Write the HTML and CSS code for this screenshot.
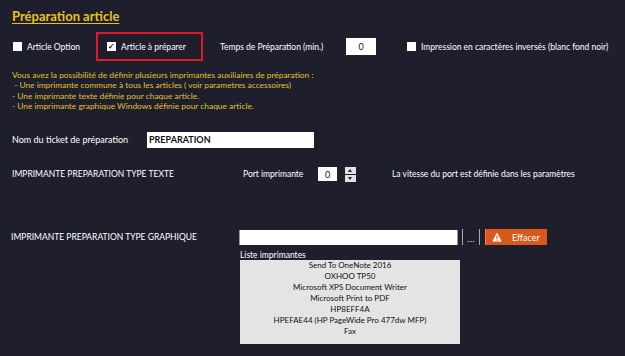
FILE: index.html
```
<!DOCTYPE html>
<html lang="fr">
<head>
  <meta charset="UTF-8" />
  <title>Préparation article</title>
  <link rel="stylesheet" href="styles.css">
</head>
<body>
<div class="page">
  <h2 class="title">Préparation article</h2>

  <div class="options">
    <label class="check opt1"><span class="box"></span>Article Option</label>
    <div class="highlight">
      <label class="check"><span class="box checked">&#10003;</span>Article à préparer</label>
    </div>
    <span class="temps">Temps de Préparation (min.)</span>
    <input class="field small" type="text" value="0">
    <label class="check inv"><span class="box"></span>Impression en caractères inversés (blanc fond noir)</label>
  </div>

  <div class="info">
    Vous avez la possibilité de définir plusieurs imprimantes auxiliaires de préparation :<br>
    &nbsp;- Une imprimante commune à tous les articles ( voir parametres accessoires)<br>
    - Une imprimante texte définie pour chaque article.<br>
    - Une imprimante graphique Windows définie pour chaque article.
  </div>

  <div class="row nom">
    <span class="lbl">Nom du ticket de préparation</span>
    <input class="field ticket" type="text" value="PREPARATION">
  </div>

  <div class="row texte">
    <span class="lbl">IMPRIMANTE PREPARATION TYPE TEXTE</span>
    <span class="port">Port imprimante</span>
    <input class="field port-in" type="text" value="0">
    <span class="spin"><span class="up"></span><span class="down"></span></span>
    <span class="hint">La vitesse du port est définie dans les paramètres</span>
  </div>

  <div class="row graph">
    <span class="lbl">IMPRIMANTE PREPARATION TYPE GRAPHIQUE</span>
    <input class="field printer" type="text" value="">
    <button class="dots">...</button>
    <button class="effacer">
      <svg width="10" height="10" viewBox="0 0 10 10"><path d="M5 0.5 L9.7 9.5 L0.3 9.5 Z" fill="#fff"/><rect x="4.4" y="3.4" width="1.2" height="3.4" fill="#d9581c"/><rect x="4.4" y="7.5" width="1.2" height="1.2" fill="#d9581c"/></svg>
      Effacer
    </button>
  </div>

  <div class="liste">
    <div class="liste-lbl">Liste imprimantes</div>
    <div class="listbox">
      <div>Send To OneNote 2016</div>
      <div>OXHOO TP50</div>
      <div>Microsoft XPS Document Writer</div>
      <div>Microsoft Print to PDF</div>
      <div>HP8EFF4A</div>
      <div>HPEFAE44 (HP PageWide Pro 477dw MFP)</div>
      <div>Fax</div>
    </div>
  </div>
</div>
</body>
</html>
```

FILE: styles.css
```
body {
  margin: 0;
  background: #1e1e2d;
  color: #fff;
  font-family: Lato, "Liberation Sans", sans-serif;
  font-size: 8.5px;
}
.page {
  padding: 8px 0 0 12px;
}
.title {
  margin: 0;
  color: #e8c21c;
  font-size: 13px;
  font-weight: bold;
  text-decoration: underline;
  text-underline-offset: 2px;
  line-height: 16px;
  width: max-content;
}
.options {
  display: flex;
  align-items: center;
  margin-top: 8px;
  height: 29px;
}
.check {
  display: flex;
  align-items: center;
  gap: 5px;
}
.box {
  width: 9px;
  height: 9px;
  background: #fff;
  color: #111;
  font-size: 8px;
  line-height: 9px;
  text-align: center;
  font-weight: bold;
}
.opt1 {
  margin-left: 1px;
  width: 83px;
}
.highlight {
  box-sizing: border-box;
  width: 107px;
  height: 29px;
  border: 2px solid #e01a24;
  display: flex;
  align-items: center;
  padding-left: 9px;
}
.temps {
  margin-left: 17px;
  width: 126px;
}
.field {
  box-sizing: border-box;
  border: none;
  background: #fff;
  color: #111;
  font-family: Lato, "Liberation Sans", sans-serif;
  font-size: 9px;
  padding: 0 2px;
  outline: none;
}
.small {
  width: 30px;
  height: 17px;
  text-align: center;
}
.inv {
  margin-left: 31px;
}
.info {
  margin-top: 9px;
  color: #e0c22a;
  font-size: 8.4px;
  line-height: 10.3px;
}
.row {
  display: flex;
  align-items: center;
}
.nom {
  margin-top: 20px;
  height: 17px;
}
.nom .lbl {
  width: 135px;
  font-size: 9px;
}
.ticket {
  width: 167px;
  height: 16px;
  font-weight: bold;
}
.texte {
  margin-top: 18px;
  height: 16px;
}
.texte .lbl {
  width: 231px;
}
.port {
  width: 75px;
}
.port-in {
  width: 19px;
  height: 14px;
  text-align: center;
}
.spin {
  margin-left: 8px;
  width: 11px;
  height: 15px;
  display: flex;
  flex-direction: column;
  gap: 1px;
}
.spin span {
  flex: 1;
  background: #e2e2e2;
  position: relative;
}
.spin .up::after,
.spin .down::after {
  content: "";
  position: absolute;
  left: 3px;
  border-left: 2.5px solid transparent;
  border-right: 2.5px solid transparent;
}
.spin .up::after {
  top: 2px;
  border-bottom: 3px solid #222;
}
.spin .down::after {
  top: 2px;
  border-top: 3px solid #222;
}
.hint {
  margin-left: 36px;
}
.graph {
  margin-top: 47px;
  height: 16px;
}
.graph .lbl {
  width: 228px;
  margin-left: -1px;
}
.printer {
  width: 219px;
  height: 15px;
  border-left: 1px solid #999;
  border-right: 1px solid #999;
}
.dots {
  margin-left: 4px;
  width: 18px;
  height: 16px;
  border: none;
  border-left: 1px solid #aaa;
  border-right: 1px solid #aaa;
  background: #1e1e2d;
  color: #fff;
  font-size: 9px;
  padding: 0;
  line-height: 20px;
}
.effacer {
  margin-left: 5px;
  width: 62px;
  height: 16px;
  border: none;
  border-left: 1px solid #f08040;
  background: #d9581c;
  color: #fff;
  font-family: Lato, "Liberation Sans", sans-serif;
  font-size: 9px;
  display: flex;
  align-items: center;
  gap: 10px;
  padding: 0 0 0 6px;
}
.liste {
  margin: 5px 0 0 228px;
}
.liste-lbl {
  line-height: 10px;
}
.listbox {
  width: 220px;
  height: 84px;
  background: #e4e4e4;
  color: #111;
  text-align: center;
  padding-top: 0;
  box-sizing: border-box;
  font-size: 8px;
  line-height: 11px;
}
```
